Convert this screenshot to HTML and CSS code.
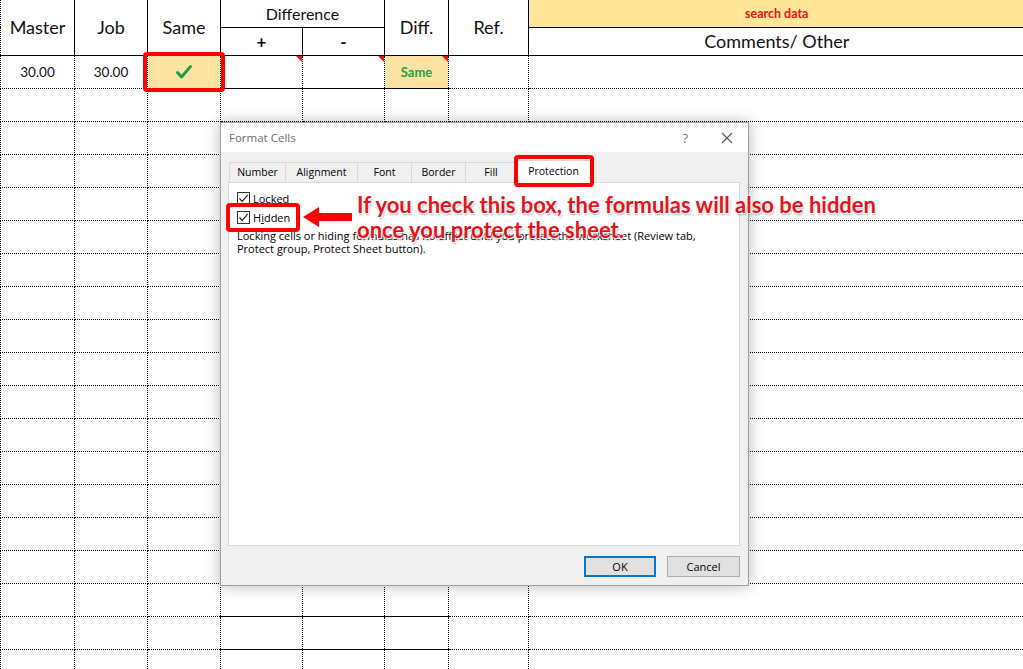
FILE: index.html
```html
<!DOCTYPE html>
<html>
<head lang="en">
	<meta charset="UTF-8">
	<title>Format Cells - Protection</title>
	<link rel="stylesheet" href="styles.css">
</head>
<body>
	<div class="sheet">
		<table class="grid">
			<colgroup>
				<col class="c-master"><col class="c-job"><col class="c-same"><col class="c-plus"><col class="c-minus"><col class="c-diff"><col class="c-ref"><col class="c-comm">
			</colgroup>
			<tr class="hrow1">
				<th rowspan="2" class="big">Master</th>
				<th rowspan="2" class="big">Job</th>
				<th rowspan="2" class="big">Same</th>
				<th colspan="2" class="mid">Difference</th>
				<th rowspan="2" class="big">Diff.</th>
				<th rowspan="2" class="big">Ref.</th>
				<th class="search">search data</th>
			</tr>
			<tr class="hrow2">
				<th class="sign">+</th>
				<th class="sign">-</th>
				<th class="comm">Comments/ Other</th>
			</tr>
			<tr class="first">
				<td class="num">30.00</td>
				<td class="num">30.00</td>
				<td class="ok hl">
					<svg width="16" height="14" viewBox="0 0 16 14"><path d="M1.5 7.5 L5.5 12 L14.5 1.5" fill="none" stroke="#1e9b46" stroke-width="2.8" stroke-linecap="round" stroke-linejoin="round"/></svg>
				</td>
				<td class="strong note"></td>
				<td class="strong note"></td>
				<td class="strong note yel samed">Same</td>
				<td></td>
				<td></td>
			</tr>
			<tr><td></td><td></td><td></td><td></td><td></td><td></td><td></td><td></td></tr>
			<tr><td></td><td></td><td></td><td></td><td></td><td></td><td></td><td></td></tr>
			<tr><td></td><td></td><td></td><td></td><td></td><td></td><td></td><td></td></tr>
			<tr><td></td><td></td><td></td><td></td><td></td><td></td><td></td><td></td></tr>
			<tr><td></td><td></td><td></td><td></td><td></td><td></td><td></td><td></td></tr>
			<tr><td></td><td></td><td></td><td></td><td></td><td></td><td></td><td></td></tr>
			<tr><td></td><td></td><td></td><td></td><td></td><td></td><td></td><td></td></tr>
			<tr><td></td><td></td><td></td><td></td><td></td><td></td><td></td><td></td></tr>
			<tr><td></td><td></td><td></td><td></td><td></td><td></td><td></td><td></td></tr>
			<tr><td></td><td></td><td></td><td></td><td></td><td></td><td></td><td></td></tr>
			<tr><td></td><td></td><td></td><td></td><td></td><td></td><td></td><td></td></tr>
			<tr><td></td><td></td><td></td><td></td><td></td><td></td><td></td><td></td></tr>
			<tr><td></td><td></td><td></td><td></td><td></td><td></td><td></td><td></td></tr>
			<tr><td></td><td></td><td></td><td></td><td></td><td></td><td></td><td></td></tr>
			<tr><td></td><td></td><td></td><td></td><td></td><td></td><td></td><td></td></tr>
			<tr><td></td><td></td><td></td><td class="strong"></td><td class="strong"></td><td class="strong"></td><td></td><td></td></tr>
			<tr><td></td><td></td><td></td><td class="strong"></td><td class="strong"></td><td class="strong"></td><td></td><td></td></tr>
			<tr><td></td><td></td><td></td><td></td><td></td><td></td><td></td><td></td></tr>
		</table>

		<!-- dialog lies over the sheet -->
		<div class="dialog">
			<div class="dlg-title">
				<span class="dlg-name">Format Cells</span>
				<span class="dlg-help">?</span>
				<svg class="dlg-close" width="12" height="12" viewBox="0 0 12 12"><path d="M1 1 L11 11 M11 1 L1 11" stroke="#555" stroke-width="1.1"/></svg>
			</div>
			<div class="dlg-body">
				<div class="tabs">
					<span class="tab t-num">Number</span>
					<span class="tab t-align">Alignment</span>
					<span class="tab t-font">Font</span>
					<span class="tab t-border">Border</span>
					<span class="tab t-fill">Fill</span>
					<span class="tab t-prot active">Protection</span>
				</div>
				<div class="panel">
					<label class="chk"><span class="box"><svg width="11" height="11" viewBox="0 0 11 11"><path d="M1.5 5.5 L4.2 8.3 L9.6 2.2" fill="none" stroke="#222" stroke-width="1.2"/></svg></span><span><u>L</u>ocked</span></label>
					<label class="chk"><span class="box"><svg width="11" height="11" viewBox="0 0 11 11"><path d="M1.5 5.5 L4.2 8.3 L9.6 2.2" fill="none" stroke="#222" stroke-width="1.2"/></svg></span><span>H<u>i</u>dden</span></label>
					<p class="desc">Locking cells or hiding formulas has no effect until you protect the worksheet (Review tab, Protect group, Protect Sheet button).</p>
				</div>
				<div class="buttons">
					<span class="btn btn-ok">OK</span>
					<span class="btn">Cancel</span>
				</div>
			</div>
		</div>

		<!-- annotations -->
		<div class="mark mark-same"></div>
		<div class="mark mark-tab"></div>
		<div class="mark mark-hidden"></div>
		<svg class="arrow" width="52" height="22" viewBox="0 0 52 22"><path d="M1 11 L17 1 L17 7 L50 7 L50 15 L17 15 L17 21 Z" fill="#f00"/></svg>
		<div class="callout">If you check this box, the formulas will also be hidden<br>once you protect the sheet.</div>
	</div>
</body>
</html>
```

FILE: styles.css
```css
html,
body {
	margin: 0;
	padding: 0;
	background: #fff;
	overflow: hidden;
}

.sheet {
	position: relative;
	width: 1023px;
	height: 669px;
	overflow: hidden;
}

.grid {
	border-collapse: collapse;
	table-layout: fixed;
	width: 1024px;
	font-family: Lato, "Liberation Sans", sans-serif;
	color: #111;
}

.c-master { width: 74px; }
.c-job { width: 73px; }
.c-same { width: 73px; }
.c-plus { width: 82px; }
.c-minus { width: 82px; }
.c-diff { width: 64px; }
.c-ref { width: 80px; }
.c-comm { width: 496px; }

.grid th,
.grid td {
	padding: 0;
	border: 1px dotted #000;
	text-align: center;
	vertical-align: middle;
	height: 33px;
	box-sizing: border-box;
}

.grid th {
	border-style: solid;
	font-weight: normal;
}

.hrow1 th {
	height: 27px;
	border-top: none;
}

.hrow2 th {
	height: 28px;
}

.big {
	font-size: 18px;
}

.mid {
	font-size: 16px;
}

.sign {
	font-size: 17px;
	font-weight: bold !important;
}

.search {
	background: #ffe699;
	color: #e8140f;
	font-size: 12.5px;
	font-weight: bold !important;
	border-top: none;
	border-right: none !important;
}

.comm {
	font-size: 18px;
	border-right: none !important;
}

.grid td:last-child {
	border-right: none;
}

.grid td:first-child,
.grid th:first-child {
	border-left: 1px dotted #000;
}

.num {
	font-size: 13.5px;
}

.hl,
.yel {
	background: #fce4a3;
}

.ok svg {
	display: block;
	margin: 0 auto;
}

.strong {
	border-bottom-style: solid !important;
}

.samed {
	color: #27a143;
	font-weight: bold;
	font-size: 13px;
}

.note {
	position: relative;
}

.note::after {
	content: "";
	position: absolute;
	top: 0;
	right: 0;
	border-top: 6px solid #e8140f;
	border-left: 6px solid transparent;
}

/* format cells dialog */
.dialog {
	position: absolute;
	left: 220px;
	top: 122px;
	width: 529px;
	height: 464px;
	box-sizing: border-box;
	border: 1px solid #9e9e9e;
	background: #f0f0f0;
	box-shadow: 0 0 14px rgba(0, 0, 0, .28);
	font-family: "Open Sans", "Liberation Sans", sans-serif;
	font-size: 11px;
	color: #000;
	display: flex;
	flex-direction: column;
}

.dlg-title {
	height: 29px;
	background: #fff;
	display: flex;
	align-items: center;
	padding: 0 15px 0 8px;
}

.dlg-name {
	flex: 1;
	font-size: 11.5px;
	color: #6d6d6d;
}

.dlg-help {
	font-size: 13px;
	color: #777;
	margin-right: 33px;
}

.dlg-body {
	flex: 1;
	display: flex;
	flex-direction: column;
	padding: 5px 8px 0 7px;
}

.tabs {
	display: flex;
	height: 25px;
	align-items: flex-end;
	padding-left: 1px;
	font-size: 10.5px;
}

.tab {
	height: 20px;
	box-sizing: border-box;
	border: 1px solid #d9d9d9;
	border-bottom: none;
	border-left: none;
	text-align: center;
	line-height: 19px;
	background: #f0f0f0;
}

.t-num { width: 57px; border-left: 1px solid #d9d9d9; }
.t-align { width: 72px; }
.t-font { width: 54px; }
.t-border { width: 54px; }
.t-fill { width: 51px; }
.t-prot { width: 74px; }

.tab.active {
	background: #fff;
	height: 23px;
	line-height: 20px;
	margin-bottom: -1px;
	position: relative;
}

.panel {
	height: 364px;
	box-sizing: border-box;
	background: #fff;
	border: 1px solid #d9d9d9;
	padding: 6px 8px 0 8px;
}

.chk {
	display: flex;
	align-items: center;
	height: 19px;
	gap: 3px;
}

.box {
	width: 11px;
	height: 11px;
	border: 1px solid #333;
	display: inline-flex;
	background: #fff;
}

.desc {
	margin: 2px 0 0 0;
	line-height: 13px;
	width: 470px;
}

.buttons {
	display: flex;
	justify-content: flex-end;
	gap: 11px;
	padding: 10px 0 0 0;
}

.btn {
	width: 73px;
	height: 21px;
	box-sizing: border-box;
	border: 1px solid #adadad;
	background: #e1e1e1;
	text-align: center;
	line-height: 19px;
	font-size: 11px;
}

.btn-ok {
	width: 72px;
	border: 2px solid #0078d7;
	line-height: 17px;
}

/* red markers over the picture */
.mark {
	position: absolute;
	border: 4px solid #f00;
	border-radius: 4px;
	box-sizing: border-box;
}

.mark-same {
	left: 143px;
	top: 52px;
	width: 82px;
	height: 40px;
}

.mark-tab {
	left: 514px;
	top: 155px;
	width: 80px;
	height: 32px;
}

.mark-hidden {
	left: 226px;
	top: 203px;
	width: 74px;
	height: 29px;
}

.arrow {
	position: absolute;
	left: 302px;
	top: 206px;
}

.callout {
	position: absolute;
	left: 357px;
	top: 192px;
	font-family: Lato, "Liberation Sans", sans-serif;
	font-weight: bold;
	font-size: 22px;
	line-height: 25px;
	color: #e3141b;
	text-shadow: 0 0 2px #fff, 0 0 2px #fff, 1px 1px 1px #fff, 1px 2px 2px rgba(0, 0, 0, .35);
	white-space: nowrap;
}
```
